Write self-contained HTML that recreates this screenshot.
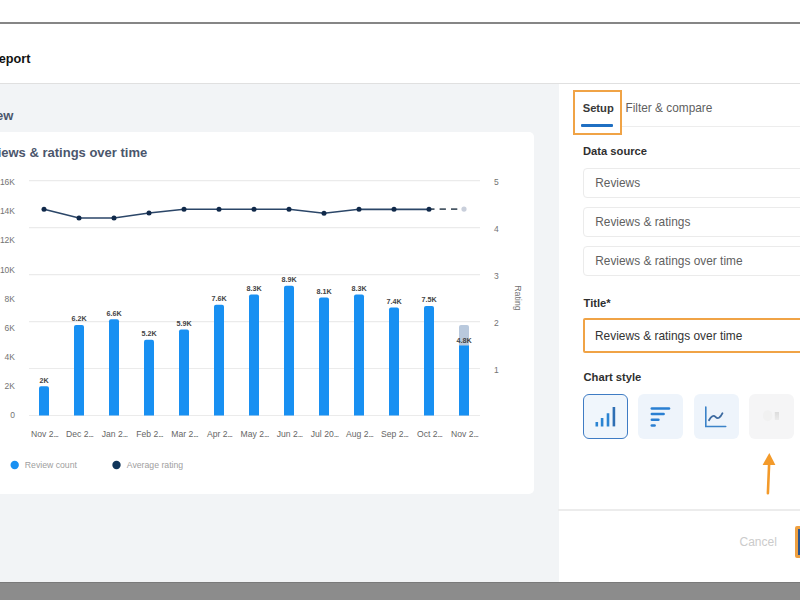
<!DOCTYPE html>
<html><head><meta charset="utf-8">
<style>
*{margin:0;padding:0;box-sizing:border-box}
html,body{width:800px;height:600px;overflow:hidden;background:#fff;font-family:"Liberation Sans",sans-serif}
.abs{position:absolute}
.topline{left:0;top:22px;width:800px;height:2px;background:#868686}
.hdr{left:-10.5px;top:51.6px;font-size:12.7px;font-weight:bold;color:#111;line-height:14px;white-space:nowrap}
.hdiv{left:0;top:82.5px;width:800px;height:1.5px;background:#e0e0e0}
.leftp{left:0;top:84px;width:558.5px;height:498px;background:#f2f4f6}
.ov{left:-44.4px;top:108.5px;font-size:13px;font-weight:bold;color:#4b566c;line-height:14px;white-space:nowrap}
.card{left:-10px;top:131.7px;width:544.3px;height:362.6px;background:#fff;border-radius:5px}
.ctitle{left:-26.2px;top:145.8px;font-size:13px;font-weight:bold;color:#4b566c;line-height:14px;white-space:nowrap}
.rightp{left:558.5px;top:84px;width:241.5px;height:498px;background:#fff}
.bottom{left:0;top:582.3px;width:800px;height:18px;background:#8c8c8c;border-top:1.2px solid #7a7a7a}
svg text{font-family:"Liberation Sans",sans-serif}
.ax{font-size:8.5px;fill:#737373}
.xl{font-size:8.6px;fill:#666}
.bl{font-size:7.2px;font-weight:bold;fill:#444}
.lg{font-size:8.7px;fill:#a0a0a0}
.lbl{font-size:11.2px;font-weight:bold;color:#2f2f2f;line-height:13px;white-space:nowrap}
.tab1{left:582.7px;top:101.5px;font-size:11.2px;font-weight:bold;color:#383838;line-height:13px}
.tab2{left:625.5px;top:102px;font-size:11.85px;color:#5f5f5f;line-height:13px;white-space:nowrap}
.obox{left:573px;top:90px;width:48.5px;height:44.5px;border:2px solid #f0a346}
.uline{left:581px;top:123.5px;width:31.5px;height:3px;background:#1f6fc2;border-radius:1px}
.tabline{left:621px;top:126px;width:179px;height:1px;background:#ededed}
.inp{left:583.2px;width:240px;height:30px;border:1px solid #ebebeb;border-radius:4px;background:#fff}
.inp span{position:absolute;left:11px;top:8px;font-size:11.9px;color:#5f5f5f;line-height:13px;white-space:nowrap}
.oinp{left:582.5px;top:318px;width:240px;height:35px;border:2.5px solid #f0a346;border-radius:2px}
.oinp span{position:absolute;left:10.5px;top:10px;font-size:11.9px;color:#333;line-height:13px;white-space:nowrap}
.btn{top:394px;width:45px;height:44.5px;border-radius:6px;background:#eef4fb}
.rdiv{left:558px;top:509px;width:242px;height:2px;background:#ececec}
.cancel{left:739.5px;top:535.5px;font-size:12px;color:#cbcbcb;line-height:13px}
.pbtn{left:795px;top:525.5px;width:20px;height:32px;border:3px solid #efa040;background:#2a5590;border-radius:2px}
</style></head><body>
<div class="abs topline"></div>
<div class="abs hdr">Report</div>
<div class="abs hdiv"></div>
<div class="abs leftp"></div>
<div class="abs ov">Overview</div>
<div class="abs card"></div>
<div class="abs ctitle">Reviews &amp; ratings over time</div>
<svg class="abs" style="left:0;top:0" width="560" height="600" viewBox="0 0 560 600">
<line x1="29" y1="180.7" x2="480" y2="180.7" stroke="#ebebeb" stroke-width="1.2"/>
<line x1="29" y1="227.7" x2="480" y2="227.7" stroke="#ebebeb" stroke-width="1.2"/>
<line x1="29" y1="274.6" x2="480" y2="274.6" stroke="#ebebeb" stroke-width="1.2"/>
<line x1="29" y1="321.6" x2="480" y2="321.6" stroke="#ebebeb" stroke-width="1.2"/>
<line x1="29" y1="368.5" x2="480" y2="368.5" stroke="#ebebeb" stroke-width="1.2"/>
<line x1="29" y1="415.5" x2="480" y2="415.5" stroke="#ebebeb" stroke-width="1.2"/>
<text x="15" y="185.1" text-anchor="end" class="ax">16K</text>
<text x="15" y="214.3" text-anchor="end" class="ax">14K</text>
<text x="15" y="243.4" text-anchor="end" class="ax">12K</text>
<text x="15" y="272.6" text-anchor="end" class="ax">10K</text>
<text x="15" y="301.8" text-anchor="end" class="ax">8K</text>
<text x="15" y="330.9" text-anchor="end" class="ax">6K</text>
<text x="15" y="360.1" text-anchor="end" class="ax">4K</text>
<text x="15" y="389.2" text-anchor="end" class="ax">2K</text>
<text x="15" y="418.4" text-anchor="end" class="ax">0</text>
<text x="494" y="185.2" class="ax">5</text>
<text x="494" y="232.2" class="ax">4</text>
<text x="494" y="279.1" class="ax">3</text>
<text x="494" y="326.1" class="ax">2</text>
<text x="494" y="373.0" class="ax">1</text>
<path d="M39,415.5 V388.3 Q39,386.3 41,386.3 H47 Q49,386.3 49,388.3 V415.5 Z" fill="#1890f2"/>
<text x="44" y="382.5" text-anchor="middle" class="bl">2K</text>
<text x="44.5" y="437" text-anchor="middle" class="xl">Nov 2<tspan letter-spacing="-0.9">...</tspan></text>
<path d="M74,415.5 V327.1 Q74,325.1 76,325.1 H82 Q84,325.1 84,327.1 V415.5 Z" fill="#1890f2"/>
<text x="79" y="321.3" text-anchor="middle" class="bl">6.2K</text>
<text x="79.5" y="437" text-anchor="middle" class="xl">Dec 2<tspan letter-spacing="-0.9">...</tspan></text>
<path d="M109,415.5 V321.3 Q109,319.3 111,319.3 H117 Q119,319.3 119,321.3 V415.5 Z" fill="#1890f2"/>
<text x="114" y="315.5" text-anchor="middle" class="bl">6.6K</text>
<text x="114.5" y="437" text-anchor="middle" class="xl">Jan 2<tspan letter-spacing="-0.9">...</tspan></text>
<path d="M144,415.5 V341.7 Q144,339.7 146,339.7 H152 Q154,339.7 154,341.7 V415.5 Z" fill="#1890f2"/>
<text x="149" y="335.9" text-anchor="middle" class="bl">5.2K</text>
<text x="149.5" y="437" text-anchor="middle" class="xl">Feb 2<tspan letter-spacing="-0.9">...</tspan></text>
<path d="M179,415.5 V331.5 Q179,329.5 181,329.5 H187 Q189,329.5 189,331.5 V415.5 Z" fill="#1890f2"/>
<text x="184" y="325.7" text-anchor="middle" class="bl">5.9K</text>
<text x="184.5" y="437" text-anchor="middle" class="xl">Mar 2<tspan letter-spacing="-0.9">...</tspan></text>
<path d="M214,415.5 V306.7 Q214,304.7 216,304.7 H222 Q224,304.7 224,306.7 V415.5 Z" fill="#1890f2"/>
<text x="219" y="300.9" text-anchor="middle" class="bl">7.6K</text>
<text x="219.5" y="437" text-anchor="middle" class="xl">Apr 2<tspan letter-spacing="-0.9">...</tspan></text>
<path d="M249,415.5 V296.5 Q249,294.5 251,294.5 H257 Q259,294.5 259,296.5 V415.5 Z" fill="#1890f2"/>
<text x="254" y="290.7" text-anchor="middle" class="bl">8.3K</text>
<text x="254.5" y="437" text-anchor="middle" class="xl">May 2<tspan letter-spacing="-0.9">...</tspan></text>
<path d="M284,415.5 V287.7 Q284,285.7 286,285.7 H292 Q294,285.7 294,287.7 V415.5 Z" fill="#1890f2"/>
<text x="289" y="281.9" text-anchor="middle" class="bl">8.9K</text>
<text x="289.5" y="437" text-anchor="middle" class="xl">Jun 2<tspan letter-spacing="-0.9">...</tspan></text>
<path d="M319,415.5 V299.4 Q319,297.4 321,297.4 H327 Q329,297.4 329,299.4 V415.5 Z" fill="#1890f2"/>
<text x="324" y="293.6" text-anchor="middle" class="bl">8.1K</text>
<text x="324.5" y="437" text-anchor="middle" class="xl">Jul 20<tspan letter-spacing="-0.9">...</tspan></text>
<path d="M354,415.5 V296.5 Q354,294.5 356,294.5 H362 Q364,294.5 364,296.5 V415.5 Z" fill="#1890f2"/>
<text x="359" y="290.7" text-anchor="middle" class="bl">8.3K</text>
<text x="359.5" y="437" text-anchor="middle" class="xl">Aug 2<tspan letter-spacing="-0.9">...</tspan></text>
<path d="M389,415.5 V309.6 Q389,307.6 391,307.6 H397 Q399,307.6 399,309.6 V415.5 Z" fill="#1890f2"/>
<text x="394" y="303.8" text-anchor="middle" class="bl">7.4K</text>
<text x="394.5" y="437" text-anchor="middle" class="xl">Sep 2<tspan letter-spacing="-0.9">...</tspan></text>
<path d="M424,415.5 V308.1 Q424,306.1 426,306.1 H432 Q434,306.1 434,308.1 V415.5 Z" fill="#1890f2"/>
<text x="429" y="302.3" text-anchor="middle" class="bl">7.5K</text>
<text x="429.5" y="437" text-anchor="middle" class="xl">Oct 2<tspan letter-spacing="-0.9">...</tspan></text>
<path d="M459,415.5 V327.1 Q459,325.1 461,325.1 H467 Q469,325.1 469,327.1 V415.5 Z" fill="#b9c9dd"/>
<rect x="459" y="345.5" width="10" height="70.0" fill="#1890f2"/>
<text x="464" y="342.5" text-anchor="middle" class="bl">4.8K</text>
<text x="464.5" y="437" text-anchor="middle" class="xl">Nov 2<tspan letter-spacing="-0.9">...</tspan></text>
<polyline points="44,209.2 79,218 114,218 149,213 184,209.2 219,209.2 254,209.2 289,209.2 324,213.2 359,209.3 394,209.3 429,209.3" fill="none" stroke="#2b4668" stroke-width="1.65"/>
<line x1="428.2" y1="209.1" x2="459" y2="209.1" stroke="#4a5866" stroke-width="1.9" stroke-dasharray="6.3,5.1"/>
<circle cx="44" cy="209.2" r="2.5" fill="#10294a"/>
<circle cx="79" cy="218" r="2.5" fill="#10294a"/>
<circle cx="114" cy="218" r="2.5" fill="#10294a"/>
<circle cx="149" cy="213" r="2.5" fill="#10294a"/>
<circle cx="184" cy="209.2" r="2.5" fill="#10294a"/>
<circle cx="219" cy="209.2" r="2.5" fill="#10294a"/>
<circle cx="254" cy="209.2" r="2.5" fill="#10294a"/>
<circle cx="289" cy="209.2" r="2.5" fill="#10294a"/>
<circle cx="324" cy="213.2" r="2.5" fill="#10294a"/>
<circle cx="359" cy="209.3" r="2.5" fill="#10294a"/>
<circle cx="394" cy="209.3" r="2.5" fill="#10294a"/>
<circle cx="429" cy="209.3" r="2.5" fill="#10294a"/>
<circle cx="464" cy="209.1" r="2.6" fill="#c9cfdb"/>
<text x="515.2" y="298" transform="rotate(90 515.2 298)" text-anchor="middle" class="ax" style="font-size:8.8px">Rating</text>
<circle cx="14.7" cy="465" r="4.2" fill="#1890f2"/>
<text x="24.8" y="468.3" class="lg">Review count</text>
<circle cx="116.5" cy="465" r="4.2" fill="#10355a"/>
<text x="126.8" y="468.3" class="lg">Average rating</text>
</svg>
<div class="abs rightp"></div>
<div class="abs tabline"></div>
<div class="abs tab1">Setup</div>
<div class="abs tab2">Filter &amp; compare</div>
<div class="abs uline"></div>
<div class="abs obox"></div>
<div class="abs lbl" style="left:583px;top:144.5px">Data source</div>
<div class="abs inp" style="top:167.6px"><span>Reviews</span></div>
<div class="abs inp" style="top:206.6px"><span>Reviews &amp; ratings</span></div>
<div class="abs inp" style="top:245.6px"><span>Reviews &amp; ratings over time</span></div>
<div class="abs lbl" style="left:583.5px;top:297px">Title*</div>
<div class="abs oinp"><span>Reviews &amp; ratings over time</span></div>
<div class="abs lbl" style="left:583.5px;top:371px">Chart style</div>
<div class="abs btn" style="left:583px;border:1.8px solid #3f7cc4;background:#f0f6fc"></div>
<div class="abs btn" style="left:638px"></div>
<div class="abs btn" style="left:693.5px"></div>
<div class="abs btn" style="left:748.7px;width:45.8px;background:#f5f5f6"></div>
<svg class="abs" style="left:558px;top:380px" width="242" height="130" viewBox="558 380 242 130">
<g stroke="#2a7fd2" stroke-width="2.3" stroke-linecap="round" fill="none">
<path d="M596.8,421.9 V426.4 M602.1,418 V426.4 M608,413.2 V426.4" stroke-width="2.6" stroke-linecap="butt" stroke="#2b84d2"/>
<path d="M613.9,407 V426.4" stroke-width="2.6" stroke-linecap="butt" stroke="#2f6fb4"/>
<line x1="651.8" y1="408.5" x2="669" y2="408.5" stroke-width="2.5"/>
<line x1="651.8" y1="414.1" x2="663.6" y2="414.1" stroke-width="2.5"/>
<line x1="651.8" y1="419.8" x2="658.4" y2="419.8" stroke-width="2.5"/>
<line x1="651.8" y1="425.6" x2="654.6" y2="425.6" stroke-width="2.5"/>
</g>
<g stroke="#3b82c8" stroke-width="1.6" fill="none" stroke-linecap="round">
<path d="M705.8,407 V426.5 H725.7"/>
<path d="M709,420.3 Q712.5,414 715.5,416.8 Q719,420.5 722.5,413.2" stroke="#3d6aa0" stroke-width="1.8"/>
</g>
<defs><linearGradient id="g4" x1="0" y1="0" x2="0" y2="1"><stop offset="0" stop-color="#dcdcdc"/><stop offset="1" stop-color="#ebebeb"/></linearGradient></defs>
<ellipse cx="767.7" cy="415.7" rx="4.8" ry="5.5" fill="#f1f1f1"/>
<rect x="774.8" y="412" width="4.2" height="8" fill="url(#g4)"/>
<g stroke="#f39a2a" stroke-width="2.6" fill="none" stroke-linecap="round">
<path d="M769.2,462 L767.9,493.3"/>
</g>
<path d="M769.3,453 L762.6,465 L775.4,465 Z" fill="#f39a2a"/>
</svg>
<div class="abs rdiv"></div>
<div class="abs cancel">Cancel</div>
<div class="abs pbtn"></div>
<div class="abs bottom"></div>
</body></html>
